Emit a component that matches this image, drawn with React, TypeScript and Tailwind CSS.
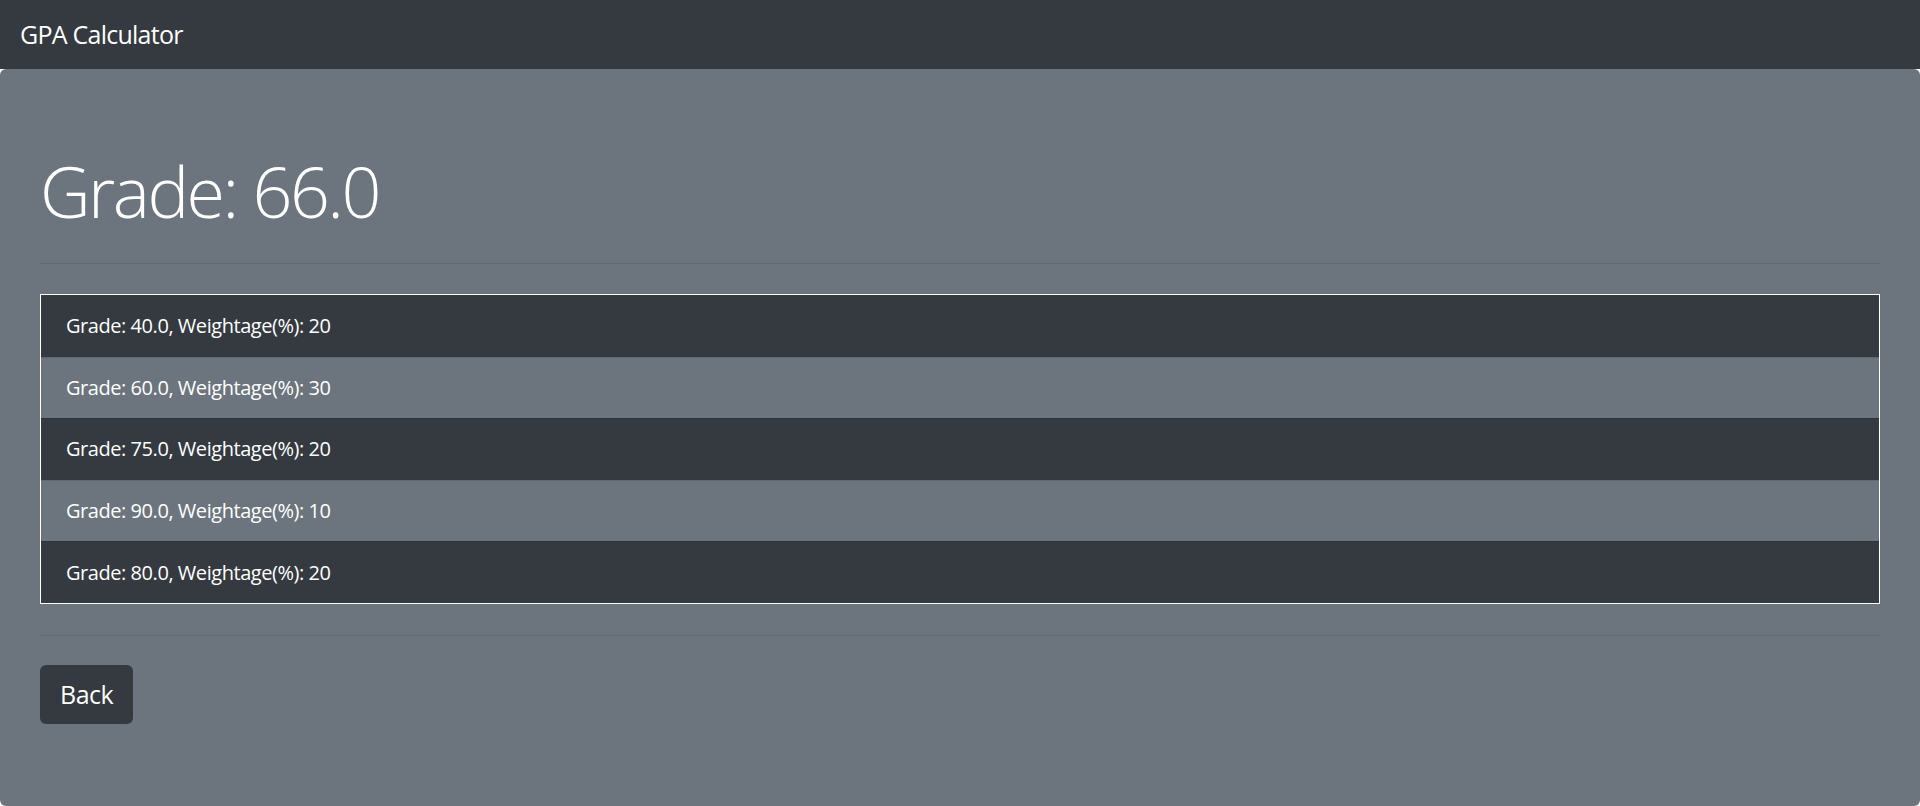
const grades = [
  { grade: "40.0", weight: 20 },
  { grade: "60.0", weight: 30 },
  { grade: "75.0", weight: 20 },
  { grade: "90.0", weight: 10 },
  { grade: "80.0", weight: 20 },
];

export default function App() {
  return (
    <div className="min-h-screen bg-white font-['Open_Sans','Noto_Sans',sans-serif] text-white">
      {/* Navbar */}
      <nav className="flex h-[69px] items-center bg-[#343a40] px-5">
        <span className="text-[25px] leading-[37px] tracking-[-0.75px]">GPA Calculator</span>
      </nav>

      {/* Jumbotron */}
      <div className="rounded-[6px] bg-[#6c757d] px-10 pt-20 pb-[82px]">
        <h1 className="text-[70px] font-light leading-[84px] tracking-[-2.5px]">Grade: 66.0</h1>
        <hr className="mt-[30px] border-t border-black/10" />

        <ul className="mt-[30px] border border-white">
          {grades.map((g, i) => (
            <li
              key={i}
              className={`flex h-[61.6px] items-center px-[25px] text-[20px] tracking-[-0.45px] ${
                i % 2 === 0 ? "bg-[#343a40]" : "bg-[#6c757d]"
              } ${i > 0 ? "border-t border-black/10" : ""}`}
            >
              Grade: {g.grade}, Weightage(%): {g.weight}
            </li>
          ))}
        </ul>

        <hr className="mt-[31px] border-t border-black/10" />

        <button className="mt-[29px] h-[59px] rounded-[6px] bg-[#343a40] px-5 text-[25px] tracking-[-0.5px] text-white">
          Back
        </button>
      </div>
    </div>
  );
}
